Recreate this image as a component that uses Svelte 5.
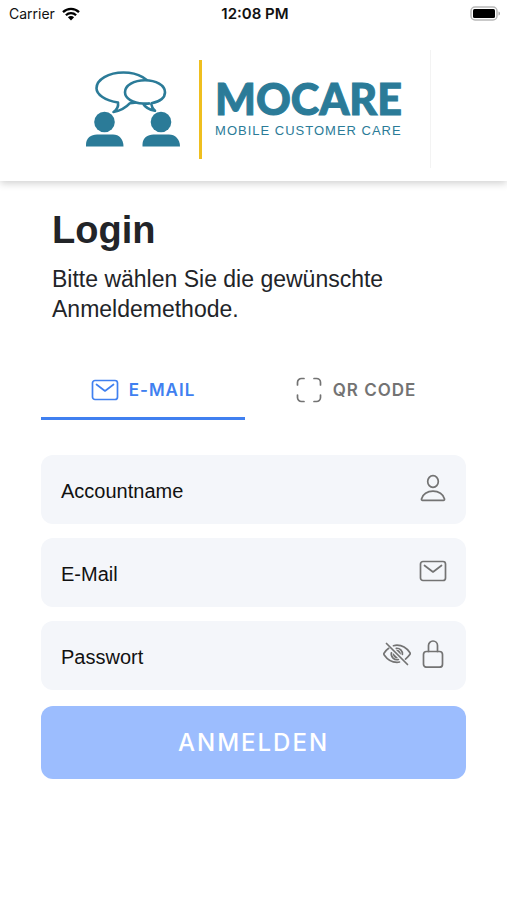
<script lang="ts">
	type Method = "email" | "qr";

	let method: Method = "email";
	let account = "";
	let email = "";
	let password = "";
	let showPassword = false;

	$: canSubmit = account !== "" && email !== "" && password !== "";

	function handleSubmit(event: Event) {
		event.preventDefault();
	}

	function togglePassword() {
		showPassword = !showPassword;
	}
</script>

{#snippet mailIcon()}
	<svg class="icon" viewBox="0 0 28 28" aria-hidden="true">
		<rect x="1.5" y="4.5" width="25" height="19" rx="2.5" />
		<path d="M5.5 8.5 14 15l8.500-6.500" />
	</svg>
{/snippet}

<div class="page">
	<header class="header">
		<div class="status-bar">
			<div class="carrier">
				<span>Carrier</span>
				<svg class="wifi" viewBox="0 0 18 14" aria-hidden="true">
					<path d="M1 5.200a11.500 11.500 0 0 1 16 0M3.900 8.200a7.300 7.300 0 0 1 10.200 0" />
					<path class="solid" d="M9 13.500 5.900 10.300a4.400 4.400 0 0 1 6.200 0z" />
				</svg>
			</div>
			<span class="time">12:08 PM</span>
			<div class="battery-wrap">
				<svg class="battery" viewBox="0 0 31 15" aria-hidden="true">
					<rect x="1" y="1" width="26" height="13" rx="4" fill="#fff" stroke="#b8b8b8" stroke-width="1.500" />
					<rect x="3" y="3" width="22" height="9" rx="1.500" fill="#000" />
					<path d="M28.500 5.500v4c2-.5 2-3.500 0-4z" fill="#aaa" />
				</svg>
			</div>
		</div>

		<div class="toolbar">
			<div class="logo">
				<svg class="people" viewBox="0 0 94 76" aria-hidden="true">
					<g fill="#fff" stroke="#2b7b98" stroke-width="2.600" stroke-linejoin="round">
						<path d="M32 31.500C19 29.500 10.500 23.500 10.500 17.200 10.500 8.500 22.500 1.500 37.500 1.500S64.500 8.500 64.500 17.200C64.500 25.500 56.500 31 44 32.200 39.500 37 34.500 40 27.500 41 31.500 38.500 32.500 35 32 31.500z" />
						<path d="M64 32.200C61.500 32.800 59.500 32.800 57 32.500 47 32 39 27.500 39 21.200 39 14.500 48 9.300 59 9.300S79 14.500 79 21.200C79 26.500 74 30.500 65.500 32.200 65.300 35.500 66.500 37.500 69 39.800 62.500 38.500 59 36 57 32.500" />
					</g>
					<g fill="#2b7b98">
						<circle cx="18.500" cy="51" r="10.300" />
						<path d="M0 75.500v-2C0 67 5 63.500 11 63.500H27C33 63.500 37.500 68 37.500 75.500z" />
						<circle cx="75" cy="51" r="10.300" />
						<path d="M56.500 75.500v-2C56.500 67 61.500 63.500 67.500 63.500H83C89 63.500 94 68 94 75.500z" />
					</g>
				</svg>
				<div class="divider"></div>
				<div class="brand">
					<span class="brand-name">MOCARE</span>
					<span class="brand-claim">MOBILE CUSTOMER CARE</span>
				</div>
			</div>
		</div>
	</header>

	<main class="content">
		<div class="intro">
			<h1>Login</h1>
			<p>Bitte wählen Sie die gewünschte Anmeldemethode.</p>
		</div>

		<div class="tabs" role="tablist">
			<button
				type="button"
				role="tab"
				class="tab"
				class:active={method === "email"}
				aria-selected={method === "email"}
				on:click={() => (method = "email")}
			>
				{@render mailIcon()}
				<span>E-MAIL</span>
			</button>
			<button
				type="button"
				role="tab"
				class="tab"
				class:active={method === "qr"}
				aria-selected={method === "qr"}
				on:click={() => (method = "qr")}
			>
				<svg class="icon" viewBox="0 0 28 28" aria-hidden="true">
					<path d="M9 2.500H6.500A4 4 0 0 0 2.500 6.500V9M19 2.500h2.500A4 4 0 0 1 25.500 6.500V9M9 25.500H6.500A4 4 0 0 1 2.500 21.500V19M19 25.500h2.500A4 4 0 0 0 25.500 21.500V19" />
				</svg>
				<span>QR CODE</span>
			</button>
		</div>

		<form on:submit={handleSubmit}>
			<div class="field">
				<label for="account">Accountname</label>
				<input id="account" type="text" bind:value={account} />
				<svg class="icon" viewBox="0 0 28 28" aria-hidden="true">
					<ellipse cx="14" cy="7.500" rx="5.300" ry="5.900" />
					<path d="M2.500 25C3.500 20 8.500 17.200 14 17.200S24.500 20 25.500 25c.1.900-.3 1.300-1 1.300h-21c-.7 0-1.100-.4-1-1.300z" />
				</svg>
			</div>

			<div class="field">
				<label for="email">E-Mail</label>
				<input id="email" type="email" bind:value={email} />
				{@render mailIcon()}
			</div>

			<div class="field">
				<label for="password">Passwort</label>
				<input id="password" type={showPassword ? "text" : "password"} bind:value={password} />
				<button type="button" class="toggle" aria-label="Passwort anzeigen" on:click={togglePassword}>
					<svg class="icon" viewBox="0 0 28 28" aria-hidden="true">
						<path d="M3.500 3.500 24.500 24.500" />
						<path d="M10.500 5.700C11.600 5.400 12.800 5.200 14 5.200c5.500 0 10 3.300 12.800 7.400.5.700.5 1.300 0 2-1.100 1.600-2.600 3.200-4.300 4.500M16.500 22c-.8.200-1.700.3-2.500.3-5.400 0-9.900-3.200-12.800-7.400-.5-.7-.5-1.300 0-2C2.400 11.300 4 9.500 5.700 8.300" />
						<path d="M13.300 8.300a5.600 5.600 0 0 1 6.100 6.100M8.400 12.800a5.700 5.700 0 0 0 7 6.700" />
						<path class="pupil" d="M12.800 9.800a4.200 4.200 0 0 1 5 5zM9.900 12.900a4.200 4.200 0 0 0 5.100 5.100z" />
					</svg>
				</button>
				<svg class="icon" viewBox="0 0 28 28" aria-hidden="true">
					<rect x="4.500" y="11.500" width="19" height="15.700" rx="3" />
					<path d="M9.500 11.500V5.500a4.500 4.500 0 0 1 9 0v6" />
				</svg>
			</div>

			<button type="submit" class="submit" class:ready={canSubmit}>ANMELDEN</button>
		</form>
	</main>
</div>

<style>
	:global(body) {
		margin: 0;
		background: #fff;
	}

	.page {
		font-family: "Liberation Sans", Arial, sans-serif;
		color: #222428;
	}

	button,
	input {
		font: inherit;
		color: inherit;
		border: none;
		background: none;
		padding: 0;
		margin: 0;
	}

	button {
		cursor: pointer;
	}

	.icon {
		display: block;
		flex: none;
		width: 28px;
		height: 28px;
		fill: none;
		stroke: currentColor;
		stroke-width: 1.7;
		stroke-linecap: round;
		stroke-linejoin: round;
	}

	.pupil {
		fill: currentColor;
		stroke: none;
	}

	/* Header */
	.header {
		box-shadow: 0 2px 8px rgba(0, 0, 0, 0.2);
	}

	.status-bar {
		display: grid;
		grid-template-columns: 1fr auto 1fr;
		align-items: center;
		height: 27px;
		padding: 0 6px 0 9px;
		font-family: Inter, "Liberation Sans", sans-serif;
		font-size: 14px;
		color: #111;
	}

	.carrier {
		display: flex;
		align-items: center;
		gap: 7px;
	}

	.wifi {
		width: 18px;
		height: 14px;
		fill: none;
		stroke: #000;
		stroke-width: 2.3;
	}

	.wifi .solid {
		fill: #000;
		stroke: none;
	}

	.time {
		font-size: 15px;
		font-weight: 600;
	}

	.battery-wrap {
		display: flex;
		justify-content: flex-end;
	}

	.battery {
		width: 31px;
		height: 15px;
	}

	.toolbar {
		display: flex;
		justify-content: center;
		padding: 23px 0 13px;
	}

	.logo {
		display: flex;
		align-items: center;
		box-sizing: border-box;
		width: 70%;
		height: 118px;
		padding-left: 10px;
		border-right: 1px solid #f3f3f3;
	}

	.people {
		flex: none;
		width: 94px;
		height: 76px;
	}

	.divider {
		flex: none;
		width: 3px;
		height: 99px;
		margin: 0 13px 0 19px;
		background: #efbf1f;
	}

	.brand {
		display: flex;
		flex-direction: column;
		gap: 2px;
		padding-bottom: 3px;
		color: #2b7b98;
		white-space: nowrap;
	}

	.brand-name {
		font-family: Lato, "Liberation Sans", sans-serif;
		font-size: 43px;
		font-weight: 900;
		line-height: 44px;
		-webkit-text-stroke: 1px currentColor;
	}

	.brand-claim {
		font-size: 13px;
		line-height: 15px;
		letter-spacing: 1px;
	}

	/* Login */
	.content {
		padding: 27px 41px;
	}

	.intro {
		padding: 0 11px;
	}

	h1 {
		margin: 0 0 12px;
		font-size: 38px;
		line-height: 44px;
	}

	p {
		margin: 0;
		font-size: 23px;
		line-height: 30px;
	}

	.tabs {
		display: flex;
		margin: 38px 0 35px;
	}

	.tab {
		display: flex;
		flex: 1 1 auto;
		align-items: center;
		justify-content: center;
		gap: 10px;
		height: 58px;
		border-bottom: 3px solid transparent;
		font-family: Inter, "Liberation Sans", sans-serif;
		font-size: 17px;
		font-weight: 600;
		letter-spacing: 1px;
		color: #737373;
	}

	.tab.active {
		border-color: #4080f0;
		color: #4080f0;
	}

	form {
		display: flex;
		flex-direction: column;
		gap: 14px;
	}

	.field {
		display: flex;
		align-items: center;
		box-sizing: border-box;
		height: 69px;
		padding: 0 19px 3px 20px;
		border-radius: 12px;
		background: #f4f6fa;
		color: #737373;
	}

	.field label {
		padding-top: 6px;
		font-size: 20px;
		line-height: 24px;
		color: #111;
	}

	.field input {
		flex: 1;
		min-width: 0;
		height: 100%;
		padding: 6px 12px 0;
		box-sizing: border-box;
		font-size: 20px;
		color: #111;
		outline: none;
	}

	.toggle {
		margin-right: 8px;
	}

	.submit {
		height: 73px;
		margin-top: 2px;
		border-radius: 12px;
		background: #9cbdfe;
		color: #fff;
		font-family: Inter, "Liberation Sans", sans-serif;
		font-size: 24px;
		font-weight: 500;
		letter-spacing: 2px;
	}

	.submit.ready {
		background: #4080f0;
	}
</style>
